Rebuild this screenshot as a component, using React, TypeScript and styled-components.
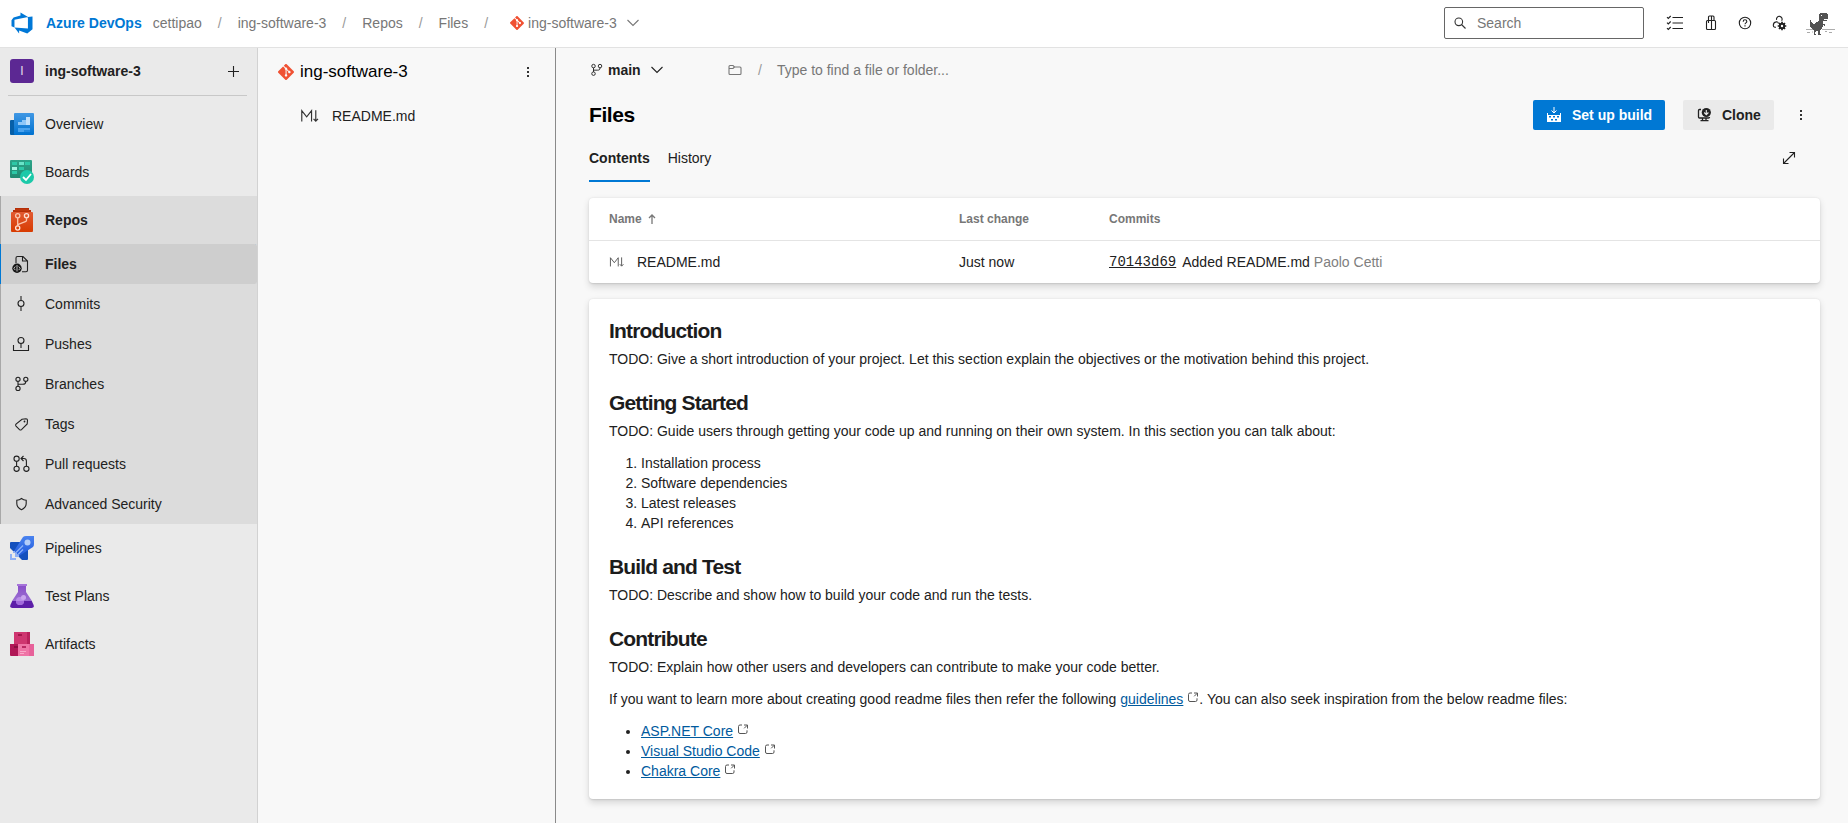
import React from 'react';
import styled, { createGlobalStyle } from 'styled-components';
import { SiGit } from 'react-icons/si';

const Global = createGlobalStyle`
  * { box-sizing: border-box; }
  html, body { margin: 0; padding: 0; }
  body {
    font-family: "Liberation Sans", Arial, sans-serif;
    font-size: 14px;
    line-height: 20px;
    color: #212121;
    background: #f8f8f8;
    overflow: hidden;
  }
  svg { display: block; flex: none; }
`;

const Page = styled.div`
  display: flex;
  flex-direction: column;
  height: 823px;
`;

const Body = styled.div`
  display: flex;
  flex: 1;
  min-height: 0;
`;

/* ---------- header ---------- */

const Header = styled.header`
  display: flex;
  align-items: center;
  height: 48px;
  padding: 0 13px 1px 10px;
  background: #fff;
  border-bottom: 1px solid #e2e2e2;
`;

const Brand = styled.span`
  margin: 0 11px 0 12px;
  font-weight: 700;
  color: #0078d4;
`;

const Crumbs = styled.nav`
  display: flex;
  align-items: center;
  color: #777;
`;

const Slash = styled.span<{ $tight?: boolean }>`
  margin: 0 ${p => (p.$tight ? 15 : 16)}px 0 16px;
  color: #999;
`;

const RepoCrumb = styled.span`
  display: flex;
  align-items: center;
  gap: 4px;
  padding-left: 6px;
  & > svg:last-child { margin-left: 6px; }
`;

const HeaderTools = styled.div`
  display: flex;
  align-items: center;
  margin-left: auto;
`;

const SearchBox = styled.div`
  display: flex;
  align-items: center;
  gap: 11px;
  width: 200px;
  height: 32px;
  margin-right: 19px;
  padding-left: 9px;
  border: 1px solid #666;
  border-radius: 2px;
  color: #777;
`;

const ToolIcons = styled.div`
  display: flex;
  gap: 11px;
  margin-right: 13px;
  color: #212121;
`;

/* ---------- sidebar ---------- */

const Sidebar = styled.aside`
  width: 258px;
  background: #eaeaea;
  border-right: 1px solid #d2d2d2;
`;

const ProjectRow = styled.div`
  display: flex;
  align-items: center;
  height: 47px;
  padding: 0 17px 1px 10px;
  font-weight: 700;
`;

const ProjectBadge = styled.span`
  width: 24px;
  height: 24px;
  margin-right: 11px;
  border-radius: 3px;
  background: #5c2893;
  color: #e4dced;
  font-size: 12px;
  font-weight: 400;
  line-height: 24px;
  text-align: center;
`;

const PushRight = styled.span`
  margin-left: auto;
`;

const Divider = styled.div`
  height: 1px;
  margin: 0 10px 4px 8px;
  background: #c8c8c8;
`;

const HubItem = styled.div<{ $bold?: boolean }>`
  display: flex;
  align-items: center;
  gap: 11px;
  height: 48px;
  padding-left: 10px;
  font-weight: ${p => (p.$bold ? 700 : 400)};
`;

const OpenHub = styled.div`
  background: #dcdcdc;
  box-shadow: inset 1px 0 #a8a8a8;
`;

const SubItem = styled.div<{ $active?: boolean }>`
  display: flex;
  align-items: center;
  gap: 12px;
  height: 40px;
  padding-left: 9px;
  font-weight: ${p => (p.$active ? 700 : 400)};
  border-radius: 0 3px 3px 0;
  background: ${p => (p.$active ? '#cecece' : 'transparent')};
  box-shadow: ${p => (p.$active ? 'inset 1px 0 #0078d4' : 'none')};
`;

/* ---------- file tree ---------- */

const Tree = styled.section`
  width: 298px;
  border-right: 1px solid #8a8a8a;
`;

const TreeTitle = styled.div`
  display: flex;
  align-items: center;
  gap: 6px;
  height: 46px;
  padding: 2px 25px 0 20px;
  font-size: 17px;
  color: #000;
`;

const TreeRow = styled.div`
  display: flex;
  align-items: center;
  gap: 12px;
  height: 44px;
  padding-left: 42px;
`;

/* ---------- main area ---------- */

const Main = styled.main`
  flex: 1;
  padding: 0 28px 0 33px;
`;

const PathBar = styled.div`
  display: flex;
  align-items: center;
  height: 44px;
`;

const Branch = styled.div`
  display: flex;
  align-items: center;
  width: 142px;
  margin-left: -3px;
  font-weight: 700;
  & > span { margin: 0 10px 0 2px; }
`;

const PathInput = styled.div`
  display: flex;
  align-items: center;
  color: #777;
`;

const TitleRow = styled.div`
  display: flex;
  align-items: center;
  height: 46px;
  padding-right: 17px;
`;

const Title = styled.h1`
  margin: 0 auto 0 0;
  font-size: 21px;
  letter-spacing: -0.42px;
  color: #000;
`;

const Button = styled.button<{ $primary?: boolean }>`
  display: flex;
  align-items: center;
  gap: 10px;
  width: ${p => (p.$primary ? 132 : 91)}px;
  height: 30px;
  margin-right: ${p => (p.$primary ? 18 : 25)}px;
  padding: 0 0 0 13px;
  border: 0;
  border-radius: 2px;
  font: 700 14px/20px "Liberation Sans", Arial, sans-serif;
  color: ${p => (p.$primary ? '#fff' : '#212121')};
  background: ${p => (p.$primary ? '#0078d4' : '#eaeaea')};
`;

const Tabs = styled.div`
  display: flex;
  align-items: stretch;
  height: 44px;
  gap: 18px;
`;

const Tab = styled.div<{ $active?: boolean }>`
  height: 44px;
  padding-top: 10px;
  font-weight: ${p => (p.$active ? 700 : 400)};
  border-bottom: 2px solid ${p => (p.$active ? '#0078d4' : 'transparent')};
`;

const ExpandSlot = styled.div`
  display: flex;
  align-items: center;
  height: 40px;
  margin: 0 24px 0 auto;
`;

const Card = styled.section`
  margin-top: 16px;
  border-radius: 4px;
  background: #fff;
  box-shadow: 0 3.2px 7.2px rgba(0, 0, 0, 0.132), 0 0.6px 1.8px rgba(0, 0, 0, 0.108);
`;

const TableRow = styled.div<{ $head?: boolean }>`
  display: grid;
  grid-template-columns: 350px 150px 1fr;
  align-items: center;
  height: ${p => (p.$head ? 43 : 42)}px;
  padding-left: 20px;
  ${p => p.$head && 'border-bottom: 1px solid #e4e4e4; font-size: 12px; font-weight: 700; color: #777;'}
`;

const Cell = styled.div`
  display: flex;
  align-items: center;
`;

const FileName = styled.span`
  margin-left: 12px;
`;

const SortGap = styled.span`
  margin-right: 6px;
`;

const Hash = styled.a`
  margin-right: 6px;
  font-family: "Liberation Mono", monospace;
  text-decoration: underline;
`;

const Author = styled.span`
  margin-left: 4px;
  color: #808080;
`;

const Readme = styled(Card)`
  height: 500px;
  padding: 18px 20px;
`;

const Heading = styled.h2`
  margin: 20px 0 4px;
  font-size: 21px;
  line-height: 28px;
  letter-spacing: -0.84px;
  color: #1c1c1c;
  &:first-child { margin-top: 0; }
`;

const Para = styled.p`
  margin: 0;
  & + & { margin-top: 12px; }
`;

const Numbered = styled.ol`
  margin: 12px 0 0;
  padding-left: 32px;
`;

const Bulleted = styled.ul`
  margin: 12px 0 0;
  padding-left: 32px;
`;

const Link = styled.a`
  color: #005a9e;
  text-decoration: underline;
`;

const ExternalMark = styled.svg`
  && { display: inline-block; }
  margin-left: 4px;
  vertical-align: 1px;
  fill: none;
  stroke: #555;
`;

/* ---------- icons ---------- */

const Line = styled.svg`
  fill: none;
  stroke: currentColor;
  stroke-width: 1.1;
`;

const Chevron = () => (
  <Line width="12" height="8" viewBox="0 0 12 8"><path d="M.5 1 6 6.5 11.5 1" /></Line>
);

const Kebab = () => (
  <svg width="4" height="12" viewBox="0 0 4 12" fill="#333">
    <path d="M1 1h2v2H1zM1 5h2v2H1zM1 9h2v2H1z" />
  </svg>
);

const Markdown = ({ size, color }: { size: number; color: string }) => (
  <svg width={size} height={size} viewBox="0 0 18 18" fill="none" stroke={color} strokeWidth="1.05">
    <path d="M1.600 14V4.200L6 9.800l4.400-5.600V14M14.200 3.800v9.600M12.200 11.500l2 2.200 2-2.200" />
  </svg>
);

const BranchIcon = ({ size }: { size: number }) => (
  <Line width={size} height={size} viewBox="0 0 24 24">
    <circle cx="9" cy="7.3" r="2.1" /><circle cx="16.8" cy="7.3" r="2.1" /><circle cx="9" cy="16.4" r="2.1" />
    <path d="M9 9.4v4.9M16.8 9.4c0 2.4-1 2.8-3 2.8H9" />
  </Line>
);

const External = () => (
  <ExternalMark width="12" height="11" viewBox="0 0 12 11">
    <path d="M5 1H3Q1.500 1 1.500 2.500v5.500Q1.500 9.500 3 9.500h5.500q1.500 0 1.500-1.500V6.300M7 1h3.500v3.500M10.300 1.200 7.200 4.300" />
  </ExternalMark>
);

const OverviewIcon = () => (
  <svg width="24" height="24">
    <defs><linearGradient id="ov" x2="0" y2="1"><stop stopColor="#4198e4" /><stop offset="1" stopColor="#0072d0" /></linearGradient></defs>
    <path d="M1 8h4v15H1q-1 0-1-1V9q0-1 1-1" fill="#065fa8" />
    <rect x="4" y="1" width="20" height="22" rx="1" fill="url(#ov)" />
    <path d="M8 13v-3h4V8h4v5z" fill="#8fc7f8" /><path d="M16 5h4v8h-4z" fill="#c3e1fb" />
    <path d="M8 16h12v2h-6v2H8z" fill="#4ba3ee" /><path d="M14 18h6v2h-6z" fill="#2388df" />
  </svg>
);

const BoardsIcon = () => (
  <svg width="24" height="24">
    <defs><linearGradient id="bo" x2="0" y2="1"><stop stopColor="#2da489" /><stop offset="1" stopColor="#218b72" /></linearGradient></defs>
    <rect width="22" height="18" rx="1" fill="url(#bo)" />
    <path d="M2 2h5v3H2zM15 2h5v3h-5zM9 7h5v3H9zM2 11h5v3H2z" fill="#2dc8a7" />
    <path d="M9 2h5v3H9z" fill="#69e4c9" /><path d="M2 7h5v3H2z" fill="#a3f5e2" />
    <circle cx="17" cy="17" r="7" fill="#1bc9a9" />
    <path d="m13 17 3 3 5-6" fill="none" stroke="#fff" strokeWidth="1.8" />
  </svg>
);

const ReposIcon = () => (
  <svg width="24" height="24">
    <defs><linearGradient id="re" x2="0" y2="1"><stop stopColor="#e25a32" /><stop offset="1" stopColor="#d83b01" /></linearGradient></defs>
    <path d="M5 0h14v2h2v2H3V2h2z" fill="#b52f08" /><path d="M5 2h14" stroke="#d04a20" strokeWidth=".6" />
    <rect x="1" y="4" width="22" height="20" rx="1" fill="url(#re)" />
    <g fill="none" stroke="#fbc6ae" strokeWidth="1.3">
      <circle cx="7.700" cy="7.800" r="2.100" /><circle cx="16.500" cy="7.800" r="2.100" stroke="#fde3d8" /><circle cx="7.700" cy="20" r="2.100" stroke="#fde3d8" />
      <path d="M7.700 10v8M16.500 10v2.200q0 1-1.100 1.400L9 16.200q-1.300.6-1.300 2" />
    </g>
  </svg>
);

const PipelinesIcon = () => (
  <svg width="24" height="24">
    <defs><linearGradient id="pi" x2="0" y2="1"><stop stopColor="#4a83ef" /><stop offset="1" stopColor="#1f59dc" /></linearGradient></defs>
    <path d="M1 6h10l-7 10-4-4V7q0-1 1-1M8 20l10-7v10q0 1-1 1h-5z" fill="#1450bd" />
    <path d="M13 1q1-1 3-1h8v8q0 2-1 3L9 20l-5-5z" fill="url(#pi)" />
    <circle cx="17.5" cy="6.5" r="3" fill="#b3cdf9" />
    <path d="m6 16.5 7-7M8 18.5l5-5" stroke="#89b0f8" strokeWidth="1.4" />
    <path d="M0 18h2v4h4v2H0zM3 15h2v2H3zM5 17h2v2h2v2H5z" fill="#8fb0f5" />
  </svg>
);

const TestIcon = () => (
  <svg width="24" height="24">
    <defs><linearGradient id="te" x2="0" y2="1"><stop stopColor="#8a4fc9" /><stop offset="1" stopColor="#9b70d2" /></linearGradient></defs>
    <path d="M8 2h8v6l6 9H2l6-9z" fill="url(#te)" /><path d="M7 0h10v2H7z" fill="#a674d9" />
    <path d="M2.2 17h19.6l1.8 4q.8 3-2 3H2.4q-2.8 0-2-3z" fill="#5d1fa8" />
    <circle cx="10" cy="17" r="4" fill="#b98de8" /><circle cx="13.5" cy="13.5" r="2.5" fill="#c9a4ee" />
    <path d="M6 17h8a4 4 0 0 1-8 0" fill="#a26bdc" />
  </svg>
);

const ArtifactsIcon = () => (
  <svg width="24" height="24">
    <path d="M4 0h16v12H4z" fill="#cf3670" /><path d="M17 0h3v12h-3z" fill="#b9215c" /><path d="M8 2h4v2H8z" fill="#a3164b" />
    <path d="M0 12h8v12H1q-1 0-1-1z" fill="#b01756" /><path d="M8 12h16v11q0 1-1 1H8z" fill="#ef74a6" />
    <path d="M19 12h5v12h-5z" fill="#e7629a" /><path d="M4 14h4v2H4z" fill="#8b0f40" /><path d="M12 14h4v2h-4z" fill="#ba2862" />
    <path d="M10 19.5h6M10 21.5h4" stroke="#f9a9c9" />
  </svg>
);

const FilesIcon = () => (
  <Line width="24" height="24" viewBox="0 0 24 24" strokeWidth="1.2">
    <path d="M7 11V6q0-1.500 1.500-1.500H14l4.500 4.500v9.200q0 1.500-1.500 1.500h-4M13.500 4.500V9h5" />
    <circle cx="8" cy="16.300" r="4.700" fill="#161616" stroke="none" />
    <path d="m6.300 14.500-1.500 1.800 1.500 1.800M9.700 14.500l1.500 1.800-1.500 1.800M8 13v6.500" stroke="#cecece" strokeWidth=".9" />
  </Line>
);

const CommitsIcon = () => (
  <Line width="24" height="24"><circle cx="12" cy="11.500" r="3" /><path d="M12 4v4.500M12 14.500V19" /></Line>
);

const PushesIcon = () => (
  <Line width="24" height="24"><circle cx="12" cy="8.500" r="3" /><path d="M12 11.500V16M4.500 13v5.500h15V13" /></Line>
);

const TagsIcon = () => (
  <Line width="24" height="24">
    <path d="M13 7.200 17 6.800q1.500 0 1.500 1.500L18.200 12 12.500 17.600q-1 .8-2 0L7 14.100q-.8-1 0-2z" />
    <circle cx="15.500" cy="9.500" r=".9" fill="currentColor" stroke="none" />
  </Line>
);

const PullIcon = () => (
  <Line width="24" height="24">
    <circle cx="7.600" cy="6.700" r="2.600" /><circle cx="7.600" cy="16.800" r="2.600" /><circle cx="17.400" cy="16.800" r="2.600" />
    <path d="M7.600 9.300v4.900M17.400 14.200V9q0-2.500-2.500-2.500H12M14.500 4 12 6.500 14.500 9" />
  </Line>
);

const ShieldIcon = () => (
  <Line width="24" height="24"><path d="M12.500 6.500q-2 1.700-4.700 1.700V11.500q0 4 4.700 6.200 4.700-2.200 4.700-6.200V8.200q-2.700 0-4.700-1.700z" /></Line>
);

const ChecklistIcon = () => (
  <Line width="24" height="24">
    <path d="M9.500 6.500H20M9.500 12H20M9.500 17.500H20" strokeWidth="1.2" />
    <path d="m4 6.200 1.300 1.300L7.700 5M4 11.700 5.300 13l2.400-2.500M4 17.200l1.300 1.300L7.700 16" />
  </Line>
);

const BagIcon = () => (
  <Line width="24" height="24">
    <rect x="8.500" y="9.500" width="9" height="9" rx="1" />
    <path d="M10.500 12V6q0-1 1-1h3.500q1 0 1 1v3.500M13.500 5v13.500M10.500 9.500V6" />
  </Line>
);

const HelpIcon = () => (
  <Line width="24" height="24">
    <circle cx="12" cy="12" r="5.700" />
    <path d="M10.200 10.700q0-1.900 1.800-1.900t1.800 1.600q0 .8-.9 1.500T12 13.300" /><path d="M12 14.300v1.200" />
  </Line>
);

const UserGearIcon = () => (
  <Line width="24" height="24">
    <path d="M8.600 8.900a2.800 2.800 0 1 1 5 .8M8 16.200H6.800A1.700 1.700 0 0 1 5.300 14.500q0-3.300 2.700-3.600 2.300-.4 2.300 1.600" />
    <path d="M14 10.700v8.600M9.700 15h8.600M11 12l6 6M17 12l-6 6" strokeWidth="1.700" />
    <circle cx="14" cy="15" r="2.200" strokeWidth="2" />
    <circle cx="14" cy="15" r="1.200" fill="#fff" stroke="none" />
  </Line>
);

const Dino = () => (
  <svg width="30" height="24" viewBox="0 0 30 24" fill="#535353">
    <path d="M15 2h7v1h1v5h-4v1h3v1h-4v3h2v2h-1v-1h-1v2h-1v2h-1v1h-1v4h1v1h-3v-4h-2v1h-1v2h1v1h-2v-5H8v-1H7v-1H6v-1H5V9h1v2h1v1h1v1h2v-1h1v-1h2v-1h1V3h1z" />
    <path d="M16 4h1v1h-1z" fill="#fff" />
    <path d="M1 18.500h7M17 18.500h13" stroke="#999" strokeWidth=".8" />
    <path d="M2 21.500h3M7 21h1M20 20.500h2M24 21.500h3" stroke="#aaa" />
  </svg>
);

const BuildIcon = () => (
  <svg width="16" height="16" viewBox="0 0 16 16" fill="#fff">
    <path fillRule="evenodd" d="M1 6h1v2h12V6h1v9H1zM3 9v1.500h2V9zm4 0v1.500h2V9zm4 0v1.500h2V9zM5 12v1.500h2V12zm4 0v1.500h2V12z" />
    <path d="M8 0v6M5.500 3.500 8 6l2.500-2.500" fill="none" stroke="#fff" />
  </svg>
);

const CloneIcon = () => (
  <Line width="16" height="16" viewBox="0 0 16 16">
    <path d="M5 2.500H3.500q-1 0-1 1V10q0 1 1 1h9q1 0 1-1M6.500 11v2.500M10 11v2.500M4.500 13.700h8" strokeWidth="1.300" />
    <circle cx="10.300" cy="5.500" r="4.600" fill="#212121" stroke="none" />
    <path d="M10.300 3v4.500M8.200 5.500l2.100 2.100 2.100-2.100" stroke="#eaeaea" />
  </Line>
);

const HUBS_TOP = [
  { label: 'Overview', icon: <OverviewIcon /> },
  { label: 'Boards', icon: <BoardsIcon /> },
];
const REPO_PAGES = [
  { label: 'Files', icon: <FilesIcon />, active: true },
  { label: 'Commits', icon: <CommitsIcon /> },
  { label: 'Pushes', icon: <PushesIcon /> },
  { label: 'Branches', icon: <BranchIcon size={24} /> },
  { label: 'Tags', icon: <TagsIcon /> },
  { label: 'Pull requests', icon: <PullIcon /> },
  { label: 'Advanced Security', icon: <ShieldIcon /> },
];
const HUBS_BOTTOM = [
  { label: 'Pipelines', icon: <PipelinesIcon /> },
  { label: 'Test Plans', icon: <TestIcon /> },
  { label: 'Artifacts', icon: <ArtifactsIcon /> },
];

export default function App() {
  return (
    <Page>
      <Global />
      <Header>
        <svg width="24" height="24" viewBox="0 0 16 16" fill="#0078d7">
          <path d="M15 3.622v8.512L11.5 15l-5.425-1.975v1.958L3.004 10.97l8.951.7V4.005L15 3.622zm-2.984.428L6.994 1v2.001L2.382 4.356 1 6.13v4.029l1.978.873V5.869l9.038-1.818z" />
        </svg>
        <Brand>Azure DevOps</Brand>
        <Crumbs>
          <span>cettipao</span><Slash>/</Slash>
          <span>ing-software-3</span><Slash>/</Slash>
          <span>Repos</span><Slash>/</Slash>
          <span>Files</span><Slash>/</Slash>
          <RepoCrumb><SiGit size={14} color="#f05133" /><span>ing-software-3</span><Chevron /></RepoCrumb>
        </Crumbs>
        <HeaderTools>
          <SearchBox>
            <svg width="12" height="12" viewBox="0 0 12 12" fill="none" stroke="#333" strokeWidth="1.1">
              <circle cx="4.800" cy="4.800" r="3.800" /><path d="m7.500 7.500 4 4" />
            </svg>
            <span>Search</span>
          </SearchBox>
          <ToolIcons><ChecklistIcon /><BagIcon /><HelpIcon /><UserGearIcon /></ToolIcons>
          <Dino />
        </HeaderTools>
      </Header>
      <Body>
        <Sidebar>
          <ProjectRow>
            <ProjectBadge>I</ProjectBadge>
            ing-software-3
            <PushRight>
              <Line width="13" height="13"><path d="M6.500 1v11M1 6.500h11" /></Line>
            </PushRight>
          </ProjectRow>
          <Divider />
          {HUBS_TOP.map(h => <HubItem key={h.label}>{h.icon}{h.label}</HubItem>)}
          <OpenHub>
            <HubItem $bold><ReposIcon />Repos</HubItem>
            {REPO_PAGES.map(p => <SubItem key={p.label} $active={p.active}>{p.icon}{p.label}</SubItem>)}
          </OpenHub>
          {HUBS_BOTTOM.map(h => <HubItem key={h.label}>{h.icon}{h.label}</HubItem>)}
        </Sidebar>
        <Tree>
          <TreeTitle>
            <SiGit size={16} color="#f05133" />
            <span>ing-software-3</span>
            <PushRight><Kebab /></PushRight>
          </TreeTitle>
          <TreeRow><Markdown size={20} color="#333" />README.md</TreeRow>
        </Tree>
        <Main>
          <PathBar>
            <Branch><BranchIcon size={20} /><span>main</span><Chevron /></Branch>
            <PathInput>
              <Line width="14" height="12"><path d="M1 9.500v-7q0-1 1-1h3L6.500 3H12q1 0 1 1v5.500q0 1-1 1H2q-1 0-1-1zM1 4.500h4L6.500 3" /></Line>
              <Slash $tight>/</Slash>
              <span>Type to find a file or folder...</span>
            </PathInput>
          </PathBar>
          <TitleRow>
            <Title>Files</Title>
            <Button $primary><BuildIcon />Set up build</Button>
            <Button><CloneIcon />Clone</Button>
            <Kebab />
          </TitleRow>
          <Tabs>
            <Tab $active>Contents</Tab>
            <Tab>History</Tab>
            <ExpandSlot>
              <Line width="14" height="14"><path d="M1.500 12.500 12.500 1.500M7.500 1.500h5v5M1.500 7.500v5h5" /></Line>
            </ExpandSlot>
          </Tabs>
          <Card>
            <TableRow $head>
              <Cell>
                <SortGap>Name</SortGap>
                <Line width="8" height="10"><path d="M4 10V1M1 4l3-3 3 3" strokeWidth="1.300" /></Line>
              </Cell>
              <Cell>Last change</Cell>
              <Cell>Commits</Cell>
            </TableRow>
            <TableRow>
              <Cell><Markdown size={16} color="#555" /><FileName>README.md</FileName></Cell>
              <Cell>Just now</Cell>
              <Cell><Hash>70143d69</Hash>Added README.md<Author>Paolo Cetti</Author></Cell>
            </TableRow>
          </Card>
          <Readme>
            <Heading>Introduction</Heading>
            <Para>TODO: Give a short introduction of your project. Let this section explain the objectives or the motivation behind this project.</Para>
            <Heading>Getting Started</Heading>
            <Para>TODO: Guide users through getting your code up and running on their own system. In this section you can talk about:</Para>
            <Numbered>
              <li>Installation process</li>
              <li>Software dependencies</li>
              <li>Latest releases</li>
              <li>API references</li>
            </Numbered>
            <Heading>Build and Test</Heading>
            <Para>TODO: Describe and show how to build your code and run the tests.</Para>
            <Heading>Contribute</Heading>
            <Para>TODO: Explain how other users and developers can contribute to make your code better.</Para>
            <Para>
              If you want to learn more about creating good readme files then refer the following <Link>guidelines</Link><External />. You can also seek inspiration from the below readme files:
            </Para>
            <Bulleted>
              <li><Link>ASP.NET Core</Link><External /></li>
              <li><Link>Visual Studio Code</Link><External /></li>
              <li><Link>Chakra Core</Link><External /></li>
            </Bulleted>
          </Readme>
        </Main>
      </Body>
    </Page>
  );
}
